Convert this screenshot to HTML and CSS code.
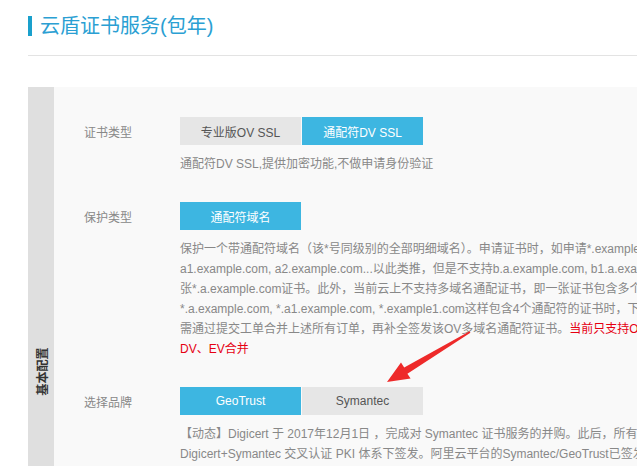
FILE: index.html
```html
<!DOCTYPE html>
<html lang="zh-CN">
<head>
    <meta charset="UTF-8">
    <title>云盾证书服务(包年)</title>
    <link rel="stylesheet" href="styles.css">
</head>
<body>
    <div class="page">
        <h2 class="title">云盾证书服务(包年)</h2>

        <div class="panel">
            <div class="side">
                <span class="side-label">基本配置</span>
            </div>
            <div class="content">
                <div class="row">
                    <div class="row-head">
                        <span class="label">证书类型</span>
                        <div class="options">
                            <button class="opt">专业版OV SSL</button>
                            <button class="opt active">通配符DV SSL</button>
                        </div>
                    </div>
                    <p class="desc">通配符DV SSL,提供加密功能,不做申请身份验证</p>
                </div>

                <div class="row">
                    <div class="row-head">
                        <span class="label">保护类型</span>
                        <div class="options">
                            <button class="opt active">通配符域名</button>
                        </div>
                    </div>
                    <p class="desc">
                        保护一个带通配符域名（该*号同级别的全部明细域名）。申请证书时，如申请*.example.com，则支持<br>
                        a1.example.com, a2.example.com...以此类推，但是不支持b.a.example.com, b1.a.example.com，需要另外申请一<br>
                        张*.a.example.com证书。此外，当前云上不支持多域名通配证书，即一张证书包含多个通配符域名。如果需要<br>
                        *.a.example.com, *.a1.example.com, *.example1.com这样包含4个通配符的证书时，下单购买4张通配符证书后，<br>
                        需通过提交工单合并上述所有订单，再补全签发该OV多域名通配符证书。<span class="warn">当前只支持OV多域名通配符证书合并，不支持</span><br>
                        <span class="warn">DV、EV合并</span>
                    </p>
                </div>

                <div class="row">
                    <div class="row-head">
                        <span class="label">选择品牌</span>
                        <div class="options">
                            <button class="opt active">GeoTrust</button>
                            <button class="opt">Symantec</button>
                        </div>
                    </div>
                    <p class="desc">
                        【动态】Digicert 于 2017年12月1日 ，完成对 Symantec 证书服务的并购。此后，所有新签发的证书都将在<br>
                        Digicert+Symantec 交叉认证 PKI 体系下签发。阿里云平台的Symantec/GeoTrust已签发的证书不受影响。
                    </p>
                </div>
            </div>

            <!-- red arrow pointing at Symantec -->
            <svg class="arrow" width="100" height="70" viewBox="380 325 100 70">
                <polygon fill="#ee2a2a" points="387,383 401,363.5 404.2,368.4 469.6,332.2 470.4,333.8 407.4,374.8 410.6,379.6"/>
            </svg>
        </div>
    </div>
</body>
</html>
```

FILE: styles.css
```css
body {
    margin: 0;
    font-family: Arial, "Liberation Sans", "Noto Sans CJK SC", sans-serif;
    background: #fff;
    overflow: hidden;
}
.page {
    margin-left: 28px;
    width: 1000px;
    padding-top: 16px;
}
.title {
    position: relative;
    margin: 0;
    padding: 0 0 19px 12px;
    border-bottom: 1px solid #e3e3e3;
    font-size: 20px;
    font-weight: normal;
    line-height: 20px;
    color: #2b9fd3;
}
.title::before {
    content: "";
    position: absolute;
    left: 0;
    top: 0;
    width: 4px;
    height: 20px;
    background: #1aa0cc;
}
.panel {
    position: relative;
    display: flex;
    margin-top: 31px;
    min-height: 568px;
    background: #f9f9f9;
}
.side {
    width: 26px;
    flex-shrink: 0;
    background: #dfdfdf;
    display: flex;
    align-items: center;
    justify-content: center;
}
.side-label {
    white-space: nowrap;
    transform: rotate(-90deg);
    font-size: 12px;
    font-weight: bold;
    color: #333;
}
.content {
    flex: 1;
    padding: 30px 0 0 30px;
}
.row {
    margin-bottom: 28px;
}
.row-head {
    display: flex;
    align-items: center;
}
.label {
    width: 96px;
    font-size: 12px;
    color: #888;
}
.options {
    display: flex;
    gap: 1px;
}
.opt {
    width: 121px;
    height: 28px;
    padding: 0;
    border: none;
    font-family: inherit;
    font-size: 12px;
    background: #e6e6e6;
    color: #555;
}
.opt.active {
    background: #3db6e1;
    color: #fff;
}
.desc {
    margin: 9px 0 0 96px;
    font-size: 12px;
    line-height: 20px;
    color: #888;
    white-space: nowrap;
}
.warn {
    color: #e60012;
}
.arrow {
    position: absolute;
    left: 352px;
    top: 237px;
}
```
